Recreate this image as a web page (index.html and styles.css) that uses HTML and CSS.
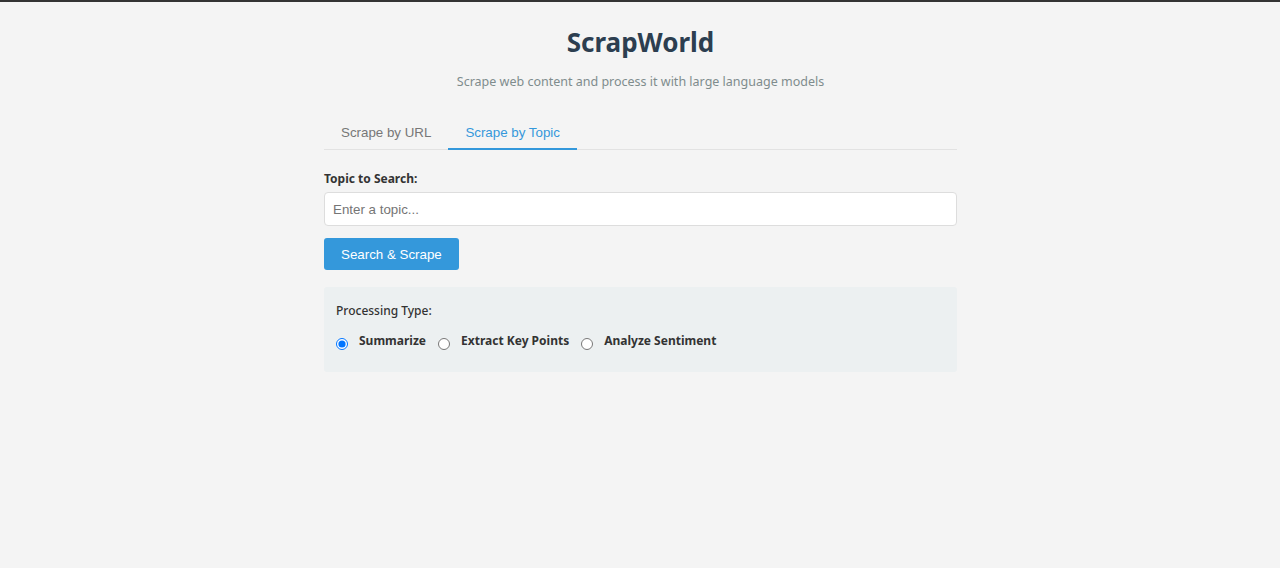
FILE: index.html
```html
<!DOCTYPE html>
<html>
<head>
<meta charset="utf-8">
<link rel="stylesheet" href="styles.css">
</head>
<body>
<div class="topbar"></div>
<div class="container">
  <h1 class="title">ScrapWorld</h1>
  <p class="subtitle">Scrape web content and process it with large language models</p>
  <div class="tabs">
    <div class="tab">Scrape by URL</div>
    <div class="tab active">Scrape by Topic</div>
  </div>
  <div class="field">
    <label class="label">Topic to Search:</label>
    <input class="input" type="text" placeholder="Enter a topic...">
  </div>
  <button class="btn">Search &amp; Scrape</button>
  <div class="panel">
    <div class="panel-label">Processing Type:</div>
    <div class="radios">
      <label class="radio"><input type="radio" name="p" checked><span>Summarize</span></label>
      <label class="radio"><input type="radio" name="p"><span>Extract Key Points</span></label>
      <label class="radio"><input type="radio" name="p"><span>Analyze Sentiment</span></label>
    </div>
  </div>
</div>
</body>
</html>
```
FILE: styles.css
```css
html, body { margin: 0; padding: 0; }
body {
  background: #f4f4f4;
  font-family: "Noto Sans", "Open Sans", sans-serif;
  color: #333;
}
.topbar { height: 2px; background: #333; }
.container {
  width: 633px;
  margin: 0 auto;
  padding: 24px 0 0 1px;
}
.title {
  margin: 0;
  text-align: center;
  font-size: 26px;
  font-weight: 700;
  color: #2c3e50;
  line-height: 32px;
}
.subtitle {
  margin: 15px 0 0;
  text-align: center;
  font-size: 12.5px;
  color: #7f8c8d;
  line-height: 18px;
}
.tabs {
  display: flex;
  margin-top: 25px;
  border-bottom: 1px solid #e2e2e2;
}
.tab {
  font-family: "Liberation Sans", Arial, sans-serif;
  font-size: 13.33px;
  color: #777;
  padding: 9px 17px 7px;
  line-height: 16px;
  border-bottom: 2px solid transparent;
  margin-bottom: -1px;
}
.tab.active {
  color: #3498db;
  border-bottom-color: #3498db;
}
.field { margin-top: 20px; }
.label {
  display: block;
  font-size: 12px;
  font-weight: 700;
  line-height: 18px;
  margin-bottom: 4px;
}
.input {
  display: block;
  box-sizing: border-box;
  width: 100%;
  height: 34px;
  padding: 0 8px;
  border: 1px solid #ddd;
  border-radius: 4px;
  background: #fff;
  font-family: "Liberation Sans", Arial, sans-serif;
  font-size: 13.33px;
  color: #333;
  outline: none;
}
.input::placeholder { color: #757575; }
.btn {
  display: block;
  margin-top: 12px;
  height: 32px;
  padding: 0 17px;
  border: none;
  border-radius: 3px;
  background: #3498db;
  color: #fff;
  font-family: "Liberation Sans", Arial, sans-serif;
  font-size: 13.33px;
}
.panel {
  margin-top: 17px;
  background: #ecf0f1;
  border-radius: 3px;
  padding: 15px 12px 22px;
}
.panel-label {
  font-size: 12px;
  line-height: 18px;
  font-weight: 500;
}
.radios {
  display: flex;
  gap: 12px;
  margin-top: 11px;
}
.radio {
  display: flex;
  align-items: center;
  font-size: 12px;
  font-weight: 700;
  line-height: 18px;
}
.radio input {
  margin: 7px 11px 0 0;
  width: 12px;
  height: 12px;
}
```
